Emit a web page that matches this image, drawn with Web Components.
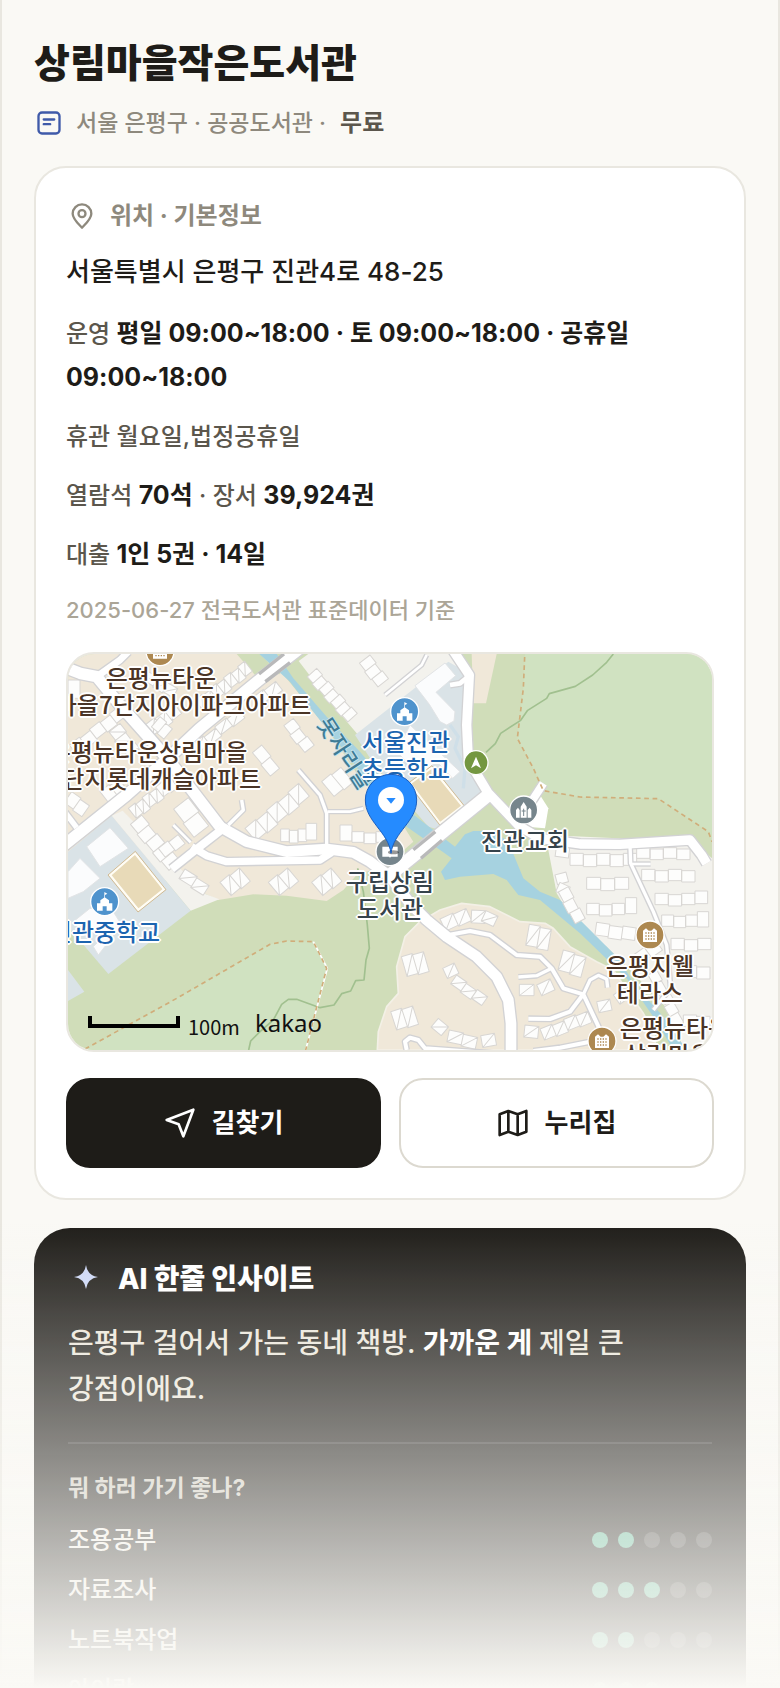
<!DOCTYPE html>
<html lang="ko">
<head>
<meta charset="utf-8">
<meta name="viewport" content="width=device-width, initial-scale=1">
<title>상림마을작은도서관</title>
<style>
  body {
    margin: 0;
    background: #faf9f5;
    color: #1e1c18;
    font-family: Inter, "Noto Sans CJK KR", sans-serif;
    font-size: 24px;
    font-weight: 500;
    word-break: keep-all;
  }
</style>
</head>
<body>
<library-page>
  <library-header name="상림마을작은도서관" place="서울 은평구 · 공공도서관 ·" fee="무료"></library-header>

  <info-card heading="위치 · 기본정보">
    <p slot="address">서울특별시 은평구 진관4로 48-25</p>
    <fact-line>운영 <b>평일 09:00~18:00 · 토 09:00~18:00 · 공휴일 09:00~18:00</b></fact-line>
    <fact-line>휴관 월요일,법정공휴일</fact-line>
    <fact-line>열람석 <b>70석</b> · 장서 <b>39,924권</b></fact-line>
    <fact-line>대출 <b>1인 5권 · 14일</b></fact-line>
    <p slot="source">2025-06-27 전국도서관 표준데이터 기준</p>

    <library-map slot="map">
      <map-label x="93" y="9" kind="place">은평뉴타운<br>상림마을7단지아이파크아파트</map-label>
      <map-label x="80" y="83" kind="place">은평뉴타운상림마을<br>13단지롯데캐슬아파트</map-label>
      <map-label x="37" y="263" kind="school">진관중학교</map-label>
      <map-label x="278" y="85" kind="river">못자리골</map-label>
      <map-label x="338" y="73" kind="school">서울진관<br>초등학교</map-label>
      <map-label x="322" y="213" kind="public">구립상림<br>도서관</map-label>
      <map-label x="457" y="172" kind="public">진관교회</map-label>
      <map-label x="582" y="297" kind="place">은평지웰<br>테라스</map-label>
      <map-label x="607" y="359" kind="place">은평뉴타운<br>상림마을8</map-label>
    </library-map>

    <action-link slot="actions" kind="solid" icon="route" href="#route">길찾기</action-link>
    <action-link slot="actions" icon="map" href="#site">누리집</action-link>
  </info-card>

  <insight-card heading="AI 한줄 인사이트" question="뭐 하러 가기 좋나?">
    <p slot="summary">은평구 걸어서 가는 동네 책방. <insight-strong>가까운 게</insight-strong> 제일 큰 강점이에요.</p>
    <rating-row label="조용공부" score="2"></rating-row>
    <rating-row label="자료조사" score="3"></rating-row>
    <rating-row label="노트북작업" score="2"></rating-row>
    <rating-row label="아이랑" score="3"></rating-row>
  </insight-card>
</library-page>

<script>
const icons = {
  note: '<rect x="3" y="3" width="18" height="18" rx="3"/><path d="M7.5 9h9M7.5 13h5.5"/>',
  pin: '<path d="M12 22c-3-3.2-8-7.600-8-12a8 8 0 0 1 16 0c0 4.400-5 8.800-8 12z"/><circle cx="12" cy="10" r="3"/>',
  route: '<path d="M22 2 14.500 22 11 13 2 9.800z"/>',
  map: '<path d="M2 5.500 8.500 3l7 2.500L22 3v15.500L15.500 21l-7-2.500L2 21zM8.500 3v15.500M15.500 5.500V21"/>'
};

function icon(name, size, width) {
  return `<svg width="${size}" height="${size}" viewBox="0 0 24 24" fill="none" stroke="currentColor"
    stroke-width="${width}" stroke-linecap="round" stroke-linejoin="round" aria-hidden="true">${icons[name]}</svg>`;
}

// Page frame, with the fade over the bottom of the window
class LibraryPage extends HTMLElement {
  constructor() {
    super();
    this.attachShadow({ mode: 'open' }).innerHTML = `
      <style>
        :host { display: block; height: 100vh; overflow: hidden; box-sizing: border-box;
          border: solid #e9e7e0; border-width: 0 2px; }
        main { padding: 38px 32px 0; }
        .fade { position: fixed; left: 0; right: 0; bottom: 0; height: 470px; pointer-events: none;
          background: linear-gradient(to bottom, #faf9f500, #faf9f5); }
      </style>
      <main><slot></slot></main>
      <div class="fade"></div>
    `;
  }
}

class LibraryHeader extends HTMLElement {
  connectedCallback() {
    this.attachShadow({ mode: 'open' }).innerHTML = `
      <style>
        :host { display: block; }
        h1 { margin: 0; font-size: 39px; line-height: 50px; font-weight: 800; }
        p { display: flex; align-items: center; margin: 17px 0 0; line-height: 36px; color: #8e897d; }
        span { font-size: 23px; }
        svg { margin: 0 13px 0 1px; color: #3f5aa9; }
        b { margin-left: 14px; color: #5b564c; font-weight: 700; }
      </style>
      <h1>${this.getAttribute('name')}</h1>
      <p>${icon('note', 28, 2)}<span>${this.getAttribute('place')}</span><b>${this.getAttribute('fee')}</b></p>
    `;
  }
}

class InfoCard extends HTMLElement {
  connectedCallback() {
    this.attachShadow({ mode: 'open' }).innerHTML = `
      <style>
        :host { display: block; margin-top: 25px; padding: 30px; background: #fff;
          border: 2px solid #e9e7e0; border-radius: 32px; }
        h2 { display: flex; align-items: center; gap: 14px; margin: 0; font-size: 24px; line-height: 36px;
          font-weight: 700; color: #8e897d; }
        h2 svg { margin-left: 2px; }
        .facts { display: grid; gap: 15px; margin-top: 20px; }
        .actions { display: grid; grid-template-columns: 1fr 1fr; gap: 18px; margin-top: 26px; }
        ::slotted(p) { margin: 0; }
        ::slotted([slot=address]) { margin-top: 18px; font-size: 26px; line-height: 40px; }
        ::slotted([slot=source]) { margin-top: 15px; font-size: 22px; line-height: 36px; color: #aba597; }
        ::slotted([slot=map]) { margin-top: 24px; }
      </style>
      <h2>${icon('pin', 28, 2)}${this.getAttribute('heading')}</h2>
      <slot name="address"></slot>
      <div class="facts"><slot></slot></div>
      <slot name="source"></slot>
      <slot name="map"></slot>
      <div class="actions"><slot name="actions"></slot></div>
    `;
  }
}

class FactLine extends HTMLElement {
  constructor() {
    super();
    this.attachShadow({ mode: 'open' }).innerHTML = `
      <style>
        :host { display: block; line-height: 44px; color: #5b564c; }
        ::slotted(b) { color: #1e1c18; font-size: 25px; line-height: 1; font-weight: 700; }
      </style>
      <slot></slot>
    `;
  }
}

class ActionLink extends HTMLElement {
  connectedCallback() {
    this.attachShadow({ mode: 'open' }).innerHTML = `
      <style>
        :host { display: block; }
        a { display: flex; align-items: center; justify-content: center; gap: 16px; padding: 23px;
          border: 2px solid #dcd9d0; border-radius: 24px; background: #fff; color: #1e1c18;
          font-size: 26px; line-height: 40px; font-weight: 700; text-decoration: none; }
        :host([kind=solid]) a { background: #1e1c18; border-color: #1e1c18; color: #fff; }
      </style>
      <a href="${this.getAttribute('href')}">${icon(this.getAttribute('icon'), 32, 2)}<span><slot></slot></span></a>
    `;
  }
}

// Map. Everything in the drawing is in thirds of a pixel.
const roads = [
  // [white width, points]
  [34, '0,610 200,450 330,335 420,250 610,95 720,10'],
  [34, '10,65 60,85 110,95 180,180 260,270 330,350 430,480 480,545'],
  [20, '110,95 180,45 205,20'],
  [16, '10,495 50,548'],
  [32, '480,545 560,590 680,620 800,612 880,622 930,650 990,695 1050,775 1100,825 1160,875 1250,935 1310,995 1345,1065 1353,1135 1353,1230'],
  [24, '490,550 400,620 335,672'],
  [22, '395,605 440,632 500,650 780,645 815,622'],
  [38, '990,690 1285,450'],
  [28, '1175,10 1228,90 1220,240 1225,345 1285,445 1380,545 1440,580 1560,597 1680,598 1890,585 1925,630 1940,655'],
  [24, '1450,415 1395,500'],
  [10, '1710,600 1712,655 1780,800 1820,900 1832,1030 1780,1095'],
  [8, '1715,657 1772,657'],
  [12, '1165,870 1230,858 1290,870 1370,930 1440,935 1475,970 1510,1030 1570,1048 1625,1165'],
  [10, '1375,996 1430,992 1475,970'],
  [12, '1405,1121 1470,1122 1530,1100 1570,1048'],
  [10, '1570,1048 1590,1005 1615,991 1640,1002 1643,1028'],
  [12, '1040,1215 1035,1190 1050,1178 1075,1185 1095,1210 1300,1225'],
  [12, '1420,1218 1500,1208 1590,1190'],
  [10, '715,375 780,450 800,505 800,610'],
  [8, '803,500 870,500 910,490'],
  [8, '340,540 392,592'],
  [10, '545,465 550,495 505,540'],
  [8, '975,150 1085,60 1100,30'],
  [14, '1170,120 1200,115 1225,95']
];

const houses = [
  // [x, y, angle, cell width, cell height, cells, diagonal]
  [24, 105, 0, 36, 55, 1], [405, 165, -38, 27, 38, 7, 1], [265, 80, 30, 34, 30, 3, 1],
  [28, 300, -38, 38, 36, 5], [180, 235, 52, 32, 42, 3, 1], [255, 240, -38, 36, 40, 3, 1],
  [300, 215, 40, 26, 40, 2], [395, 300, -38, 44, 30, 4, 1], [575, 160, -38, 44, 34, 2, 1],
  [700, 220, 52, 34, 36, 3], [770, 70, 48, 26, 38, 7], [930, 30, 52, 30, 40, 3],
  [205, 490, -38, 26, 38, 6, 1], [245, 510, 50, 36, 44, 5], [385, 458, 52, 52, 56, 2],
  [35, 440, 35, 34, 40, 2], [120, 440, -38, 34, 44, 2], [605, 300, 50, 44, 36, 2],
  [785, 410, -40, 36, 58, 2], [555, 550, -40, 42, 50, 5, 1], [662, 552, 0, 26, 38, 3],
  [738, 535, 0, 32, 50, 1], [840, 540, 0, 36, 48, 1], [876, 560, 0, 36, 32, 3],
  [375, 672, 32, 44, 34, 2, 1], [480, 712, -40, 36, 52, 2, 1], [625, 712, -40, 36, 52, 2, 1],
  [755, 712, -40, 36, 52, 2, 1], [295, 610, -38, 36, 34, 2],
  [1140, 822, -25, 42, 40, 2, 1], [1235, 795, 3, 42, 38, 1, 1], [1278, 797, 25, 40, 34, 1, 1],
  [1408, 838, 10, 34, 64, 2, 1], [1510, 915, 15, 36, 62, 2, 1], [1024, 935, -16, 34, 62, 2, 1],
  [1148, 970, -25, 38, 34, 1, 1], [1190, 990, 35, 38, 32, 3, 1], [1378, 1018, 0, 44, 34, 1, 1],
  [1430, 1020, -25, 44, 36, 1, 1], [992, 1100, -18, 34, 58, 2, 1], [1135, 1120, 40, 40, 34, 1, 1],
  [1168, 1155, 12, 44, 36, 2, 1], [1262, 1172, -10, 42, 36, 1, 1], [1395, 1140, 6, 42, 36, 1, 1],
  [1440, 1152, -22, 38, 36, 4, 1], [1610, 1070, -12, 40, 34, 1, 1], [1660, 1050, -35, 40, 34, 1, 1],
  [1490, 600, 8, 40, 34, 1], [1530, 625, 0, 40, 36, 5], [1580, 697, 0, 42, 36, 3],
  [1580, 775, 0, 38, 34, 3], [1696, 758, 0, 34, 48, 1], [1610, 832, 8, 40, 38, 3],
  [1485, 690, -15, 34, 30, 1], [1500, 712, 25, 34, 30, 1], [1525, 725, 62, 36, 34, 3],
  [1730, 608, 0, 40, 32, 4], [1745, 673, 0, 40, 34, 4], [1785, 745, 0, 40, 34, 3],
  [1905, 738, 0, 38, 38, 1], [1805, 810, 0, 36, 34, 3], [1912, 800, 0, 34, 46, 1],
  [1833, 880, 0, 40, 34, 3], [1870, 962, 0, 40, 36, 2], [1720, 930, -35, 40, 34, 2],
  [1790, 975, 60, 34, 30, 3], [1840, 1070, 60, 34, 32, 2], [1870, 1110, 0, 40, 34, 2]
];

function drawRoads() {
  const line = (pts, width, color) =>
    `<polyline points="${pts}" stroke="${color}" stroke-width="${width}"/>`;
  return roads.map(r => line(r[1], r[0] + 8, '#d2d2d4')).join('') +
    roads.map(r => line(r[1], r[0], '#fff')).join('');
}

function drawHouses() {
  return houses.map(([x, y, angle, w, h, count, diagonal]) => {
    let d = '';
    for (let i = 0; i < count; i++) {
      // neighbours step in and out a little
      const top = i % 2 ? 4 : 0;
      d += `M${i * w} ${top}h${w}v${h}h${-w}z`;
      if (diagonal) d += `m0 ${h}l${w} ${-h}`;
    }
    return `<path d="${d}" transform="translate(${x} ${y}) rotate(${angle})"/>`;
  }).join('');
}

const glyphs = {
  school: '<path d="M-23 27V5h10V-4L0-13 13-4V5h10v22H6V14h-12v13zM-1-12v-17l9 5-7 4v8z" fill="#fff"/>',
  trail: '<path d="M0-18 15 17 0 8-15 17z" fill="#fff"/>',
  church: '<path d="M-23 23V0l6-7 5 7v23zM-9 23v-33l9-14 9 14v33zM12 23V0l6-7 5 7v23z" fill="#fff"/><path d="M0-4v22M-6 3H6" stroke="#76858c" stroke-width="3"/>',
  library: '<path d="M-23-15h20l3 3 3-3h20v30H3l-3 3-3-3h-20z" fill="#fff"/>',
  home: '<path d="M-21 21v-34l9-7 8 7H4l8-7 9 7v34z" fill="#fff"/><path d="M-14-6h30M-14 3h30M-14 12h30" stroke="#ad8850" stroke-width="4" stroke-dasharray="4 4"/>'
};

function marker(x, y, color, name, r = 42) {
  return `<g transform="translate(${x} ${y})"><circle r="${r}" fill="${color}" stroke="#fff" stroke-width="4"/>${glyphs[name]}</g>`;
}

class LibraryMap extends HTMLElement {
  constructor() {
    super();
    this.attachShadow({ mode: 'open' }).innerHTML = `
      <style>
        :host { display: block; position: relative; overflow: hidden; border: 2px solid #e9e7e0;
          border-radius: 28px; font-family: "Noto Sans CJK KR", sans-serif; }
        svg { display: block; width: 100%; }
        .pin { position: absolute; inset: 0; pointer-events: none; }
        .scale, .brand { position: absolute; color: #111; line-height: 28px; }
        .scale { left: 120px; bottom: 9px; font-size: 20px; font-weight: 400; }
        .brand { left: 187px; bottom: 13px; font: 24px/28px "Noto Sans", sans-serif; text-decoration: none; }
      </style>
      <svg viewBox="24 27 1932 1188" fill="none" stroke-linejoin="round" role="img" aria-label="도서관 주변 지도">
        <rect x="24" y="27" width="1932" height="1188" fill="#d0ddb9"/>
        <g fill="#d0e2c1">
          <path d="M1395 27 1390 130 1372 280 1420 370 1450 437 1560 456 1795 461 1945 560 1956 590V27z"/>
          <path d="M75 1215 350 1060 630 898 680 888 760 890 800 970 737 1215z"/>
        </g>
        <g fill="#f0e8d9">
          <path d="M24 27H620L700 125 800 250 900 400 1035 500 1060 590 980 660 890 690 850 735 800 768 680 752 580 748 475 765 380 720 24 640z"/>
          <path d="M952 1215 955 1160 980 1085 1015 1045 1010 965 1035 875 1080 830 1140 795 1205 775 1290 785 1380 830 1455 835 1480 850 1530 905 1610 950 1660 975 1700 1035 1750 1105 1780 1160 1790 1215z" stroke="#f3f0e6" stroke-width="5"/>
          <path d="M1235 27h75l-32 148h-38z"/>
        </g>
        <g fill="#f3f2ed">
          <path d="M716 48 745 27H1180L1230 90 1060 200 890 275z"/>
          <path d="M1460 570 1465 615 1490 745 1550 845 1640 905 1720 985 1840 1110 1870 1215H1956V640L1900 590z"/>
          <path d="M155 512 188 497 380 690 430 745 478 763 392 797z"/>
        </g>
        <path d="M530 27h70l62 60-75 5z" fill="#d0ddb9"/>
        <path d="M683 75 712 55 890 265 945 350 1060 500 1110 545 1060 590 960 430z" fill="#d0ddb9"/>
        <g fill="#dae3e7">
          <path d="M24 620 155 512 392 797 145 987 24 845z"/>
          <path d="M24 975 73 1040 24 1068z"/>
          <path d="M885 270 1165 50 1235 90 1212 240 1222 330 1270 440 1140 555 1105 545 940 355z"/>
        </g>
        <path d="M1170 240 1195 275 1185 310 1215 370 1210 430" stroke="#cfdfe8" stroke-width="10"/>
        <g fill="#fbfcfd" stroke="#e2e4e6" stroke-width="3">
          <path d="M1065 122 1155 54 1187 92 1128 142 1185 200 1182 228 1160 240 1140 230 1108 178z"/>
          <path d="M1050 240 1200 380 1178 400 1130 350 1080 390 1010 320z"/>
          <path d="M80 605 150 548 205 610 120 665z"/>
          <path d="M24 680 60 640 120 700 70 740 24 760zM40 830 90 790 160 800 185 840 115 930 100 905 135 870z"/>
        </g>
        <g fill="#e8dab8" stroke="#fffdf5" stroke-width="7">
          <path d="M1115 368 1208 483 1140 535 1050 415z"/>
          <path d="M225 625 312 733 235 795 150 690z"/>
        </g>
        <g stroke="#d2bb93" stroke-width="3">
          <path d="M1116 362 1214 484 1140 541 1044 415z"/>
          <path d="M226 619 318 734 234 801 144 690z"/>
        </g>
        <path d="M598 27H650L700 100 800 215 900 320 1055 505 1185 605 1215 568 1240 558 1300 558 1345 590 1390 700 1440 740 1500 765 1600 865 1680 945 1720 1015 1810 1115 1880 1215H1840L1790 1130 1700 1000 1560 865 1440 765 1375 750 1340 705 1300 687 1200 695 1155 705 1143 680 1175 640 1150 622 1040 545 930 420 870 340 760 200 690 110z" fill="#a6d2e0"/>
        <g fill="#fdfdfc" stroke="#d8d6d3" stroke-width="3">${drawHouses()}</g>
        <path d="M1400 480 1440 450 1465 490 1455 550 1400 545z" fill="#fff"/>
        ${drawRoads()}
        <g stroke="#b9b9ba" stroke-width="10">
          <path d="M597 87 672 27M616 110 690 53M1060 614 1126 560M1083 640 1146 586"/>
        </g>
        <g stroke="#a1c08f" stroke-width="5">
          <path d="M1660 27 1640 52 1598 90 1546 124 1468 146 1460 160 1403 196 1382 226 1322 265 1306 296 1278 322"/>
          <path d="M893 670 910 740 922 840 928 910 918 945 912 1005 887 1007 872 1038 845 1046 822 1080 780 1088 710 1063 685 1063 665 1078 640 1125 600 1160 572 1188 566 1215"/>
        </g>
        <path d="M760 890 802 970 737 1215" stroke="#fff" stroke-width="5"/>
        <g stroke="#d0ad7a" stroke-width="5" stroke-dasharray="14 11">
          <path d="M1394 36 1390 130 1372 280 1420 370 1450 437 1560 456 1795 461 1945 560 1956 590"/>
          <path d="M75 1212 350 1060 630 898 680 888 760 890 800 970 737 1215"/>
        </g>
        ${marker(300, 20, '#ad8850', 'home')}
        ${marker(134, 770, '#4f93cd', 'school')}
        ${marker(1034, 200, '#4f93cd', 'school')}
        ${marker(1248, 353, '#749741', 'trail', 36)}
        ${marker(1391, 495, '#76858c', 'church')}
        ${marker(990, 620, '#76858c', 'library')}
        ${marker(1770, 870, '#ad8850', 'home')}
        ${marker(1626, 1188, '#ad8850', 'home')}
        <path d="M90 1113v30h264v-30" stroke="#000" stroke-width="12" stroke-linejoin="miter"/>
      </svg>
      <slot></slot>
      <span class="scale">100m</span>
      <a class="brand" href="#kakao">kakao</a>
      <svg class="pin" viewBox="24 27 1932 1188" fill="none" aria-hidden="true">
        <ellipse cx="1000" cy="622" rx="16" ry="6" fill="#0006"/>
        <path d="M993 625C985 560 916 530 916 465a77 77 0 0 1 154 0C1070 530 1001 560 993 625z" fill="#258bff" stroke="#1a5fc0" stroke-width="3"/>
        <circle cx="993" cy="465" r="39" fill="#fff"/>
        <path d="M979 459h28l-14 17z" fill="#258bff"/>
      </svg>
    `;
  }
}

class MapLabel extends HTMLElement {
  connectedCallback() {
    this.style.left = this.getAttribute('x') + 'px';
    this.style.top = this.getAttribute('y') + 'px';
    this.attachShadow({ mode: 'open' }).innerHTML = `
      <style>
        :host { position: absolute; transform: translateX(-50%); white-space: nowrap; text-align: center;
          font-size: 24px; line-height: 27px; font-weight: 500; color: #4a3426;
          text-shadow: 2px 0 #fff, -2px 0 #fff, 0 2px #fff, 0 -2px #fff, 1px 1px #fff, -1px 1px #fff, 1px -1px #fff, -1px -1px #fff; }
        :host([kind=school]) { color: #1c64b0; }
        :host([kind=public]) { color: #36434b; }
        :host([kind=river]) { color: #3f7c96; font-size: 22px; transform: translateX(-50%) rotate(57deg);
          text-shadow: 1px 0 #c8e4ed, -1px 0 #c8e4ed, 0 1px #c8e4ed, 0 -1px #c8e4ed; }
      </style>
      <slot></slot>
    `;
  }
}

class InsightCard extends HTMLElement {
  connectedCallback() {
    this.attachShadow({ mode: 'open' }).innerHTML = `
      <style>
        :host { display: block; margin-top: 28px; padding: 30px 34px; background: #1e1c18;
          border-radius: 36px; color: #fff; }
        h2 { display: flex; align-items: center; gap: 16px; margin: 0; font-size: 28px; line-height: 42px; font-weight: 800; }
        h2 svg { margin-left: 2px; }
        h3 { margin: 0 0 9px; padding-top: 26px; border-top: 2px solid #ffffff1f; font-size: 23px; line-height: 36px;
          font-weight: 700; color: #cfcbc1; }
        ::slotted(p) { margin: 20px 0 30px; font-size: 28px; line-height: 46px; color: #ece7dc; }
      </style>
      <h2><svg width="32" height="32" viewBox="0 0 32 32" aria-hidden="true"><path d="M16 2q1.500 10.500 12 12-10.500 1.500-12 12-1.500-10.500-12-12 10.500-1.500 12-12z" fill="#cdd8f7"/></svg>${this.getAttribute('heading')}</h2>
      <slot name="summary"></slot>
      <h3>${this.getAttribute('question')}</h3>
      <slot></slot>
    `;
  }
}

class InsightStrong extends HTMLElement {
  constructor() {
    super();
    this.attachShadow({ mode: 'open' }).innerHTML = `
      <style>
        :host { display: inline; font-weight: 700; color: #fff; }
      </style>
      <slot></slot>
    `;
  }
}

class RatingRow extends HTMLElement {
  connectedCallback() {
    const score = Number(this.getAttribute('score'));
    let dots = '';
    for (let i = 0; i < 5; i++) {
      dots += `<i class="${i < score ? 'on' : ''}"></i>`;
    }
    this.attachShadow({ mode: 'open' }).innerHTML = `
      <style>
        :host { display: flex; align-items: center; justify-content: space-between; line-height: 50px;
          color: #f4f1ea; }
        .dots { display: flex; gap: 10px; }
        i { width: 16px; height: 16px; border-radius: 50%; background: #ffffff2e; }
        i.on { background: #5cb896; }
      </style>
      <span>${this.getAttribute('label')}</span>
      <div class="dots" role="img" aria-label="5점 중 ${score}점">${dots}</div>
    `;
  }
}

customElements.define('library-page', LibraryPage);
customElements.define('library-header', LibraryHeader);
customElements.define('info-card', InfoCard);
customElements.define('fact-line', FactLine);
customElements.define('action-link', ActionLink);
customElements.define('library-map', LibraryMap);
customElements.define('map-label', MapLabel);
customElements.define('insight-card', InsightCard);
customElements.define('insight-strong', InsightStrong);
customElements.define('rating-row', RatingRow);
</script>
</body>
</html>
